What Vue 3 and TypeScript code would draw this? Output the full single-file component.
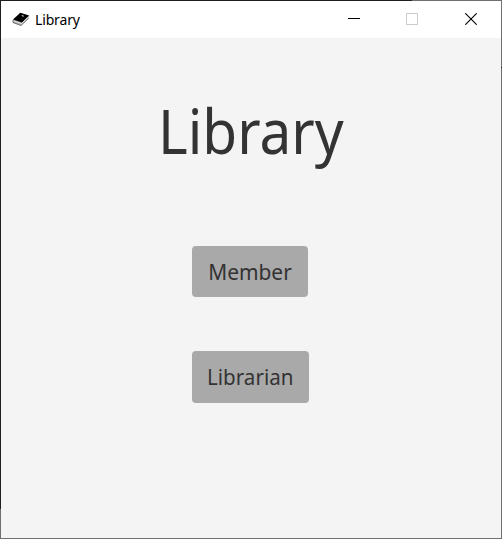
<script setup lang="ts">
interface MenuItem {
  id: string
  label: string
}

const title = 'Library'
const items: MenuItem[] = [
  { id: 'member', label: 'Member' },
  { id: 'librarian', label: 'Librarian' },
]
</script>

<template>
  <div class="window">
    <header class="titlebar">
      <svg class="book" viewBox="0 0 18 16" width="18" height="16">
        <path d="M1 8 L8.5 1 L17 3.5 L16.5 6.5 L9 13.5 L1 11 Z" fill="#aaa" />
        <path d="M1 7.6 L8.3 .7 L17 3.6 L10 10.4 Z" fill="#000" />
        <path d="M1 8 L.9 10.4 L9 13.6 L16.5 6.5" fill="none" stroke="#555" stroke-width=".7" />
        <path d="M2 9 L9.6 11.6 L16 5.4" fill="none" stroke="#eee" stroke-width=".9" />
        <path d="M9.7 3.6 L11.8 4.3" stroke="#ccc" stroke-width="1.1" />
      </svg>
      <span class="caption">{{ title }}</span>
      <div class="controls">
        <svg viewBox="0 0 12 12" width="12" height="12" shape-rendering="crispEdges">
          <path d="M0 5h12v1H0z" fill="#000" />
        </svg>
        <svg viewBox="0 0 12 12" width="12" height="12">
          <rect x=".5" y=".5" width="11" height="11" fill="none" stroke="#ccc" />
        </svg>
        <svg class="close" viewBox="0 0 12 12" width="12" height="12">
          <path d="M.3.3l11.4 11.4M11.7.3L.3 11.7" stroke="#000" stroke-width="1.1" />
        </svg>
      </div>
    </header>
    <main class="content">
      <h1>{{ title }}</h1>
      <button v-for="item in items" :key="item.id" :class="item.id" type="button">
        <span>{{ item.label }}</span>
      </button>
    </main>
  </div>
</template>

<style>
body {
  margin: 0;
}
</style>

<style scoped>
.window {
  box-sizing: border-box;
  width: 502px;
  height: 539px;
  padding: 1px;
  overflow: hidden;
  background:
    linear-gradient(#211e22, #211e22) 0 0 / 412px 1px no-repeat,
    linear-gradient(#211e22, #211e22) 0 0 / 1px 509px no-repeat,
    linear-gradient(#222, #222) 501px 67px / 1px 1px no-repeat,
    #707070;
  font-family: "Noto Sans", "Open Sans", sans-serif;
}
.titlebar {
  display: flex;
  align-items: center;
  height: 37px;
  padding-left: 11px;
  background: #fff;
}
.caption {
  margin-left: 5px;
  font-size: 14px;
  line-height: 20px;
  letter-spacing: -0.15px;
  color: #000;
}
.controls {
  display: flex;
  gap: 46px;
  margin-left: auto;
  padding: 0 24px 1px 0;
}
.controls svg {
  display: block;
}
.controls .close {
  margin-left: 1px;
}
.content {
  display: flex;
  flex-direction: column;
  align-items: flex-start;
  height: 500px;
  background: #f4f4f4;
  color: #333;
}
h1 {
  margin: 48px 0 0 157px;
  font-size: 62px;
  font-weight: 400;
  line-height: 88px;
  white-space: nowrap;
  transform: scaleX(0.915);
  transform-origin: left;
}
button {
  box-sizing: border-box;
  margin: 72px 0 0 191px;
  padding: 0;
  border: 0;
  border-radius: 4px;
  background: #a9a9a9;
  color: #333;
  font-family: inherit;
  font-size: 22.5px;
  line-height: 50px;
}
button span {
  display: inline-block;
  transform: scaleX(0.93);
}
.member {
  width: 116px;
  height: 51px;
}
.librarian {
  width: 117px;
  height: 52px;
  margin-top: 54px;
}
.librarian span {
  transform: scaleX(0.915);
}
</style>
